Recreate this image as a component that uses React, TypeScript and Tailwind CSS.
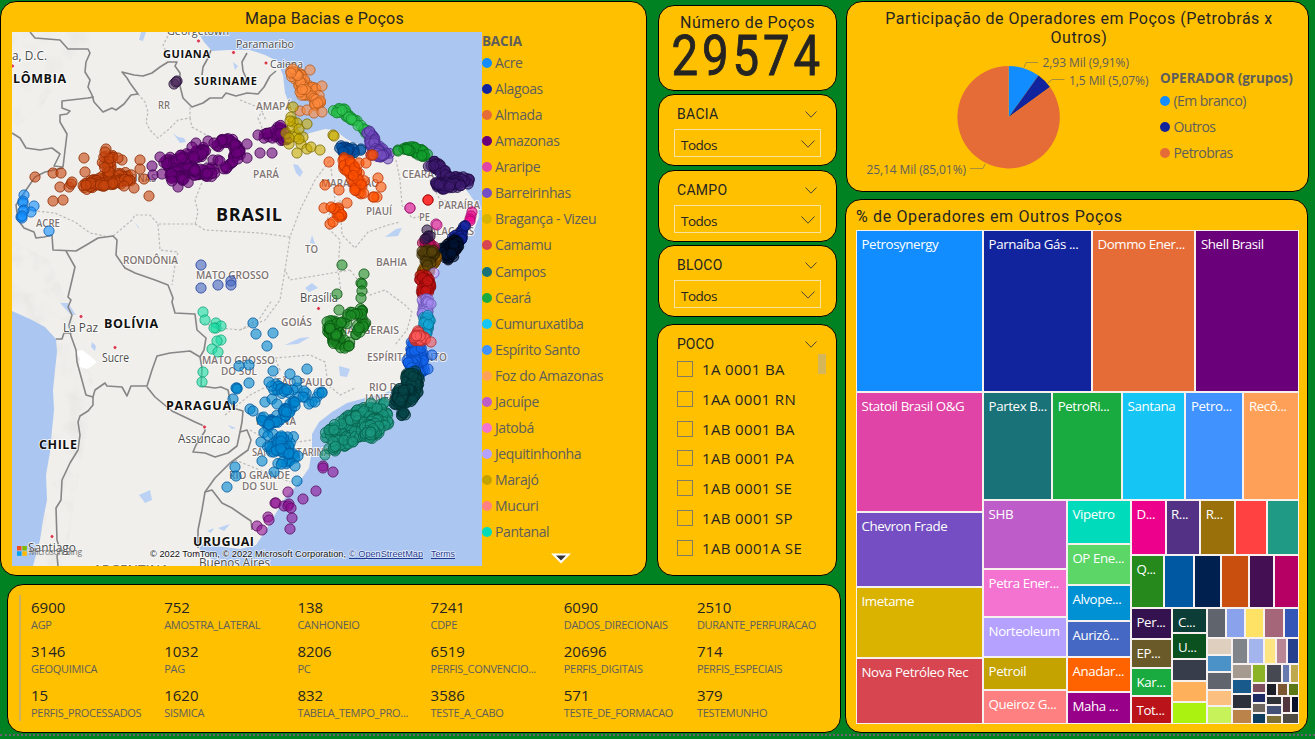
import React from "react";

const TITLE = "font-['Roboto',sans-serif] text-[#252423]";
const BODY = "font-['Open_Sans','Noto_Sans',sans-serif]";

/* ---------- Map geometry ---------- */

type Pt = [number, number];

const LAND_BORDERS = [
  "M30,32L35,38L60,40L68,49L88,49L90,53L86,62L85,72L90,80L88,87L92,95L94,102L103,112L112,108L116,110L124,104L131,95L138,94L130,83L127,78L122,72L134,75L143,76L152,73L160,67L168,62L177,62L175,66L180,73L180,86L183,98L192,107L203,103L210,98L222,98L226,93L236,96L247,93L258,94L264,87L270,76L276,71",
  "M211,50L208,58L203,67L202,75",
  "M247,53L242,62L243,71L247,80",
  "M94,97L88,98L62,101L62,108L70,111L67,114L60,115L60,122L67,134L63,167L54,166L60,154L52,148L40,150L26,148L20,138L12,133",
  "M63,168L45,172L35,177L24,193L16,205L18,220L24,228L34,232L36,238L44,237L52,235L53,250L76,251L88,244L98,238L113,236L117,240L116,255L125,268L135,273L155,280L168,285L173,298L172,302L175,313L195,314L197,330L206,338L204,350L200,357L202,368L201,386L215,388L221,387L228,390L230,400L233,408L243,411L242,422L240,432",
  "M66,251L75,267L72,280L68,297L71,300L68,307L72,315L69,325L71,336L76,350L77,362L83,384L86,395L93,397L95,390L105,383L107,386L122,387L127,396L131,386L147,386L152,370L157,356L170,353L190,351L200,357",
  "M56,339L62,339L64,333L70,333",
  "M147,387L155,397L172,411L195,422L204,426L205,431L196,445L193,452L205,453L215,457L228,453L237,446L240,432L247,430L251,440L248,450L230,463L215,478L205,492L202,510L198,530L198,548",
  "M205,492L212,490L222,503L232,508L245,517L251,521L252,530",
  "M93,397L93,405L88,411L80,416L78,422L80,435L78,450L70,463L62,480L61,500L56,508L57,540L60,550L57,556L58,566",
];

const STATE_BORDERS = [
  "M138,94L145,102L148,112L146,122L150,130L158,138L168,130L178,120L190,118L190,107",
  "M190,118L192,127L215,140L205,165L203,180L195,200L198,212L195,225",
  "M24,193L28,210L55,213L75,222L90,233L105,236",
  "M113,236L132,220L135,215L150,215L158,224L195,224",
  "M158,224L160,250L178,252L175,265L172,285",
  "M195,224L205,230L260,233L290,237L300,210L315,180L330,160",
  "M290,237L285,270L290,280L320,275L350,270",
  "M285,270L280,300L265,320L240,330L220,328L200,322",
  "M240,330L260,318L272,300",
  "M330,160L335,200L325,225L340,240L338,270L342,300",
  "M340,200L342,235L355,248L368,232L388,225L400,222",
  "M396,160L400,180L402,205L412,218L430,215",
  "M350,270L370,295L385,290L405,305L412,312L407,330L395,345",
  "M263,110L258,118L265,135L272,140",
  "M240,100L260,108L266,120",
  "M430,180L440,200L470,205",
  "M225,415L250,395L270,385L280,370L275,358L310,355L325,362L328,385L340,395L355,388",
  "M250,430L275,445L312,440",
  "M235,460L260,470L290,482",
  "M170,32L163,45L170,60",
];

const LAKES = [
  "M173,133L178,137L184,138L186,142L180,143Z",
  "M293,164L298,165L303,172L300,177L296,173Z",
  "M60,303L68,303L76,315L70,314Z",
  "M139,495L150,490L152,500L145,503Z",
  "M141,32L146,32L143,41L139,40Z",
  "M92,342L96,346L95,351L91,347Z",
  "M305,288L312,283L318,288L309,292Z",
  "M285,345L300,338L310,337L298,344Z",
  "M134,222L140,230L138,226Z",
  "M385,237L396,229L402,228L398,236Z",
  "M339,366L350,369L347,377L340,376Z",
  "M228,425L236,428L232,429Z",
  "M207,531L214,528L211,533Z",
  "M218,528L230,524L224,531Z",
  "M312,235L315,244L310,243Z",
  "M233,62L238,66L235,70Z",
];

interface Cluster {
  fill: string;
  stroke: string;
  pts?: Pt[];
  dense?: { path: Pt[]; spread: number; n: number }[];
}

const CLUSTERS: Cluster[] = [
  { fill: "#118dff", stroke: "#0a5fb4", pts: [[24, 195], [23, 201], [23, 203], [34, 206], [31, 212], [24, 210], [23, 211], [21, 217], [22, 218], [22, 216], [49, 231]] },
  {
    fill: "#c8460f", stroke: "#8f2a00",
    pts: [[35, 177], [53, 173], [61, 173], [53, 201], [63, 200], [60, 187], [69, 187], [71, 184], [72, 182], [84, 158], [106, 149], [105, 152], [85, 172], [140, 160], [140, 169], [144, 179], [134, 188], [149, 196], [122, 160], [118, 158], [124, 186]],
    dense: [{ path: [[84, 186], [98, 181], [115, 179], [129, 176]], spread: 5, n: 50 }, { path: [[107, 157], [109, 172]], spread: 7, n: 22 }, { path: [[83, 186], [112, 184], [130, 180]], spread: 2.5, n: 36 }],
  },
  {
    fill: "#6b007b", stroke: "#3f0050",
    pts: [[160, 157], [152, 166], [153, 175], [162, 174], [196, 143], [208, 141], [214, 143], [247, 144], [247, 158], [258, 135], [260, 153], [272, 153], [213, 160], [218, 160], [220, 161], [178, 187], [172, 181], [192, 147]],
    dense: [{ path: [[168, 161], [178, 168], [195, 172], [212, 172]], spread: 5, n: 85 }, { path: [[175, 160], [198, 155], [202, 150]], spread: 4, n: 46 }, { path: [[170, 177], [188, 179]], spread: 4, n: 16 }, { path: [[218, 146], [226, 138], [236, 145], [238, 155], [226, 169]], spread: 3.2, n: 52 }, { path: [[264, 137], [275, 135], [281, 128], [285, 143]], spread: 4, n: 32 }],
  },
  { fill: "#4b2a5c", stroke: "#200a35", pts: [[174, 84], [177, 81], [176, 82]] },
  {
    fill: "#ff8a3d", stroke: "#b85b1c",
    pts: [[293, 69], [310, 70], [322, 86], [300, 111], [307, 110], [314, 113], [322, 112], [291, 73]],
    dense: [{ path: [[290, 73], [298, 76], [305, 88], [313, 92]], spread: 5, n: 55 }, { path: [[300, 92], [316, 97], [318, 106]], spread: 4, n: 25 }],
  },
  { fill: "#c8ae00", stroke: "#7c6a00", pts: [[293, 107], [291, 117], [293, 122], [307, 124], [297, 123], [286, 133], [295, 134], [303, 137], [296, 137], [289, 144], [301, 144], [297, 153], [307, 149], [311, 147], [320, 150], [292, 127], [299, 129], [290, 121], [289, 138], [333, 135], [334, 136], [299, 139]] },
  { fill: "#2ec652", stroke: "#12852d", dense: [{ path: [[335, 111], [342, 110], [350, 117], [360, 125], [368, 134]], spread: 2.5, n: 42 }] },
  { fill: "#744ec2", stroke: "#46288b", dense: [{ path: [[370, 133], [373, 145], [383, 153]], spread: 4, n: 36 }, { path: [[374, 153], [388, 155]], spread: 4, n: 30 }] },
  { fill: "#0054a6", stroke: "#00306c", dense: [{ path: [[342, 147], [348, 152], [362, 148]], spread: 3.5, n: 34 }] },
  {
    fill: "#ff5200", stroke: "#c03200",
    pts: [[329, 162], [325, 185], [324, 208], [331, 207], [330, 224], [339, 190], [347, 203], [378, 178], [381, 187], [377, 197], [373, 197], [371, 155], [373, 155], [359, 163], [366, 163], [339, 217], [333, 222], [374, 197]],
    dense: [{ path: [[346, 162], [353, 172], [360, 185], [360, 196]], spread: 6, n: 50 }, { path: [[336, 209], [340, 212], [340, 218]], spread: 3, n: 12 }],
  },
  { fill: "#13a02f", stroke: "#08681a", pts: [[398, 150], [398, 151]], dense: [{ path: [[406, 149], [416, 150], [428, 156]], spread: 3.5, n: 38 }] },
  { fill: "#3e1a70", stroke: "#1f0a42", dense: [{ path: [[430, 163], [442, 170], [448, 180], [468, 180]], spread: 4.5, n: 70 }, { path: [[437, 186], [460, 184]], spread: 4, n: 60 }] },
  { fill: "#ff1212", stroke: "#a50a0a", pts: [[428, 200], [428, 200]] },
  { fill: "#e044a7", stroke: "#a01272", pts: [[410, 208], [410, 208], [436, 224], [437, 225]] },
  { fill: "#ec008c", stroke: "#a8066c", pts: [[472, 212], [471, 216], [470, 219], [470, 221]] },
  { fill: "#12239e", stroke: "#081252", dense: [{ path: [[466, 228], [460, 236], [454, 240]], spread: 4, n: 34 }] },
  { fill: "#001433", stroke: "#000510", dense: [{ path: [[443, 252], [455, 244], [449, 256]], spread: 5, n: 80 }] },
  { fill: "#c2115f", stroke: "#7d083c", dense: [{ path: [[424, 241], [432, 246]], spread: 3, n: 16 }] },
  { fill: "#351d51", stroke: "#1c0c2c", pts: [[427, 230], [428, 236], [427, 238], [430, 236], [425, 239]] },
  { fill: "#9b6500", stroke: "#5e3900", dense: [{ path: [[434, 256], [430, 266], [422, 275]], spread: 4, n: 60 }] },
  { fill: "#57420c", stroke: "#2d2100", dense: [{ path: [[424, 254], [432, 252], [428, 262]], spread: 4, n: 34 }] },
  { fill: "#c4a2ff", stroke: "#7a56b8", pts: [[434, 273]] },
  { fill: "#c81515", stroke: "#860808", dense: [{ path: [[423, 278], [428, 285], [424, 292]], spread: 4.5, n: 60 }] },
  { fill: "#a58af0", stroke: "#6a55b4", dense: [{ path: [[426, 299], [425, 313]], spread: 4, n: 36 }], pts: [[431, 304]] },
  { fill: "#16a8d8", stroke: "#0b6f93", dense: [{ path: [[426, 318], [428, 324], [426, 334]], spread: 4.5, n: 30 }] },
  { fill: "#1467f0", stroke: "#0745b3", dense: [{ path: [[415, 344], [418, 358], [420, 370]], spread: 6, n: 115 }, { path: [[411, 362], [417, 375]], spread: 5, n: 30 }], pts: [[432, 355], [428, 369]] },
  { fill: "#ff5a5a", stroke: "#b22b2b", dense: [{ path: [[419, 333], [416, 339], [424, 338]], spread: 3.5, n: 36 }], pts: [[431, 342]] },
  { fill: "#07464a", stroke: "#002c30", dense: [{ path: [[412, 376], [413, 388], [404, 400]], spread: 7, n: 150 }, { path: [[402, 390], [398, 404]], spread: 5, n: 50 }, { path: [[400, 414], [404, 414]], spread: 2, n: 6 }] },
  {
    fill: "#1b9a80", stroke: "#08604c",
    pts: [[353, 442], [325, 455], [371, 403], [377, 408], [329, 430], [334, 430]],
    dense: [{ path: [[326, 434], [345, 424], [362, 413], [388, 407]], spread: 6, n: 85 }, { path: [[333, 447], [350, 437], [370, 425], [386, 420]], spread: 6, n: 130 }, { path: [[365, 434], [376, 430]], spread: 7, n: 55 }],
  },
  { fill: "#1d8c25", stroke: "#0a5410", pts: [[342, 265], [364, 274], [337, 294], [361, 283], [362, 284], [362, 291], [339, 310], [361, 298]], dense: [{ path: [[331, 322], [334, 333], [340, 343]], spread: 6, n: 62 }, { path: [[343, 323], [360, 311], [363, 322], [355, 340], [341, 351]], spread: 4.5, n: 38 }] },
  { fill: "#4565c2", stroke: "#223e9c", pts: [[201, 265], [201, 288], [218, 285], [231, 281], [231, 285]] },
  { fill: "#1bdda5", stroke: "#10a87b", pts: [[203, 312], [205, 320], [216, 323], [216, 328], [221, 326], [214, 328], [221, 340], [217, 341], [212, 349], [218, 352], [203, 372], [202, 382]] },
  {
    fill: "#0087d1", stroke: "#005aa0",
    pts: [[253, 323], [256, 334], [273, 333], [267, 346], [239, 366], [249, 365], [249, 383], [237, 388], [236, 388], [237, 389], [233, 399], [250, 409], [253, 411], [307, 369], [290, 374], [273, 371], [269, 382], [297, 381], [304, 391], [322, 392], [317, 397], [312, 402], [309, 404], [315, 402], [235, 467], [236, 476], [227, 487], [262, 461], [297, 481], [295, 466], [298, 456], [261, 442], [274, 472], [265, 402], [272, 399], [277, 404], [287, 390], [295, 402], [319, 393], [303, 397], [322, 393]],
    dense: [{ path: [[268, 388], [285, 388], [303, 396]], spread: 6, n: 18 }, { path: [[263, 420], [275, 421], [286, 412], [297, 401]], spread: 3.5, n: 42 }, { path: [[268, 430], [276, 450], [290, 436]], spread: 7, n: 46 }, { path: [[277, 452], [290, 456], [281, 465]], spread: 6, n: 20 }],
  },
  { fill: "#8f0f92", stroke: "#590b60", pts: [[323, 466], [323, 468], [333, 472], [316, 491], [303, 499], [288, 492], [275, 503], [276, 503], [284, 506], [289, 504], [288, 506], [291, 508], [292, 518], [290, 529], [268, 517], [269, 520], [257, 526], [262, 530]] },
];

function seeded(seed: number) {
  let s = seed;
  return () => {
    s = (s * 1664525 + 1013904223) % 4294967296;
    return s / 4294967296;
  };
}

function spreadPoints(path: Pt[], spread: number, n: number, seed: number): Pt[] {
  const rnd = seeded(seed);
  const out: Pt[] = [];
  for (let i = 0; i < n; i++) {
    const t = rnd() * (path.length - 1);
    const k = Math.floor(t);
    const f = t - k;
    const [ax, ay] = path[k];
    const [bx, by] = path[k + 1];
    const ang = rnd() * Math.PI * 2;
    const r = Math.sqrt(rnd()) * spread;
    out.push([ax + (bx - ax) * f + Math.cos(ang) * r, ay + (by - ay) * f + Math.sin(ang) * r]);
  }
  return out;
}

/* text, left x, baseline y, width, size, kind */
type Label = [string, number, number, number, number, "country" | "state" | "city"];

const LABELS: Label[] = [
  ["BRASIL", 216, 221, 66, 18, "country"],
  ["GUIANA", 163, 58, 47, 11, "country"],
  ["SURINAME", 194, 85, 63, 11, "country"],
  ["LÔMBIA", 13, 83, 53, 12.5, "country"],
  ["BOLÍVIA", 104, 328, 54, 12.5, "country"],
  ["PARAGUAI", 166, 410, 70, 12.5, "country"],
  ["CHILE", 39, 449, 38, 12.5, "country"],
  ["URUGUAI", 193, 546, 61, 12.5, "country"],
  ["RR", 158, 109, 12, 10.5, "state"],
  ["AMAPÁ", 256, 110, 36, 10.5, "state"],
  ["PARÁ", 253, 178, 26, 10.5, "state"],
  ["AMAZONAS", 104, 182, 52, 10.5, "state"],
  ["ACRE", 36, 227, 24, 10.5, "state"],
  ["RONDÔNIA", 123, 264, 55, 10.5, "state"],
  ["MATO GROSSO", 196, 279, 73, 10.5, "state"],
  ["TO", 305, 253, 13, 10.5, "state"],
  ["MARANHÃO", 321, 187, 58, 10.5, "state"],
  ["CEARÁ", 402, 178, 32, 10.5, "state"],
  ["PIAUÍ", 366, 215, 26, 10.5, "state"],
  ["PARAÍBA", 438, 209, 42, 10.5, "state"],
  ["PE", 419, 221, 11, 10.5, "state"],
  ["ALAGOAS", 430, 235, 44, 10.5, "state"],
  ["BAHIA", 376, 266, 31, 10.5, "state"],
  ["GOIÁS", 281, 326, 31, 10.5, "state"],
  ["MINAS GERAIS", 326, 334, 73, 10.5, "state"],
  ["MATO GROSSO", 202, 364, 73, 10.5, "state"],
  ["DO SUL", 221, 374.5, 36, 10.5, "state"],
  ["ESPÍRITO SANTO", 367, 361, 80, 10.5, "state"],
  ["SÃO PAULO", 276, 386, 57, 10.5, "state"],
  ["RIO DE", 369, 391, 34, 10.5, "state"],
  ["JANEIRO", 365, 402, 42, 10.5, "state"],
  ["PARANÁ", 256, 425, 40, 10.5, "state"],
  ["SANTA CATARINA", 252, 456, 78, 10.5, "state"],
  ["RIO GRANDE", 229, 479, 61, 10.5, "state"],
  ["DO SUL", 242, 489.5, 36, 10.5, "state"],
  ["Georgetown", 167, 35, 62, 11.5, "city"],
  ["Paramaribo", 236, 48, 58, 11.5, "city"],
  ["Caiena", 270, 68, 33, 11.5, "city"],
  ["a, D.C.", 12, 60, 35, 12, "city"],
  ["La Paz", 63, 332, 35, 12, "city"],
  ["Sucre", 102, 362, 27, 12, "city"],
  ["Assuncao", 178, 443, 52, 12, "city"],
  ["Santiago", 28, 552, 48, 12, "city"],
  ["Brasília", 300, 302, 38, 12, "city"],
  ["Buenos Aires", 199, 567, 71, 12, "city"],
  ["ARGENTINA", 93, 574, 76, 12, "state"],
];

const CITY_DOTS: Pt[] = [[198.5, 41], [233.5, 52.5], [266, 63], [12.5, 66], [81, 316.5], [115, 347.5], [204.5, 427], [52, 536.5], [318.5, 308.5], [197, 553]];

function MapView() {
  return (
    <svg className="block h-[534px] w-[470px] shrink-0" viewBox="12 32 470 534" fontFamily="'Open Sans','Noto Sans',sans-serif">
      <defs>
        <filter id="relief" x="0" y="0" width="100%" height="100%">
          <feTurbulence type="fractalNoise" baseFrequency="0.045" numOctaves="3" seed="4" />
          <feColorMatrix values="0 0 0 0 0.5 0 0 0 0 0.5 0 0 0 0 0.48 0.9 0 0 0 -0.42" />
          <feComposite operator="in" in2="SourceGraphic" />
        </filter>
      </defs>
      <rect x="12" y="32" width="470" height="534" fill="#f0efec" />
      <path d="M12,240L50,260L75,320L95,390L85,440L75,500L65,566L12,566Z" filter="url(#relief)" opacity="0.5" />
      <path d="M12,32H110L70,60L40,110L12,130Z" filter="url(#relief)" opacity="0.4" />
      <path d="M74,352L82,350L90,356L97,362L88,369L79,367L80,358Z" fill="#fff" />
      <path d="M12,311L30,319L45,327L56,339L57,352L55,370L53,390L54,410L52,430L50,452L46,475L47,500L43,520L40,540L33,566H12Z" fill="#abc6f0" />
      <path
        d="M198,32L204,42L212,51L228,50L250,50L265,55L277,61L283,75L285,93L291,108L294,125L300,138L310,133L325,129L335,130L345,138L352,142L365,146L380,152L395,150L410,150L425,160L440,173L455,183L465,188L472,198L478,205L479,217L474,230L463,242L452,254L440,264L433,282L427,300L425,320L426,335L422,350L418,365L408,380L396,388L383,394L365,398L347,403L332,412L319,422L312,434L312,450L309,468L298,484L285,498L276,513L266,530L256,545L240,549L215,546L205,540L199,549L210,557L215,566H482V32Z"
        fill="#abc6f0"
      />
      {LAKES.map((d, i) => (
        <path key={i} d={d} fill="#bcd2f4" />
      ))}
      {STATE_BORDERS.map((d, i) => (
        <path key={i} d={d} fill="none" stroke="#bcbab8" strokeWidth="1.2" strokeDasharray="2.5 2" />
      ))}
      {LAND_BORDERS.map((d, i) => (
        <path key={i} d={d} fill="none" stroke="#868686" strokeWidth="1.6" strokeLinejoin="round" />
      ))}
      {CITY_DOTS.map(([x, y], i) => (
        <circle key={i} cx={x} cy={y} r="2" fill="#d6394c" stroke="#fff" strokeWidth="0.8" />
      ))}
      {LABELS.map(([t, x, y, w, s, kind], i) => (
        <text
          key={i}
          x={x}
          y={y}
          fontSize={s}
          textLength={w}
          lengthAdjust={kind === "country" ? "spacing" : "spacingAndGlyphs"}
          fontWeight={kind === "country" ? 700 : kind === "state" ? 600 : 400}
          fill={kind === "country" ? "#111" : kind === "state" ? "#7f7472" : "#4c4c4c"}
          stroke="#fff"
          strokeWidth="2"
          strokeOpacity="0.75"
          paintOrder="stroke"
        >
          {t}
        </text>
      ))}
      {CLUSTERS.map((c, i) => {
        const pts = [...(c.dense ?? []).flatMap((d, k) => spreadPoints(d.path, d.spread, d.n, i * 97 + k * 13 + 7)), ...(c.pts ?? [])];
        return (
          <g key={i} fill={c.fill} fillOpacity="0.6" stroke={c.stroke} strokeOpacity="0.8" strokeWidth="1">
            {pts.map(([x, y], k) => (
              <circle key={k} cx={x} cy={y} r="5.1" />
            ))}
          </g>
        );
      })}
      <rect x="17" y="546" width="4.5" height="4.5" fill="#f25022" />
      <rect x="22.3" y="546" width="4.5" height="4.5" fill="#7fba00" />
      <rect x="17" y="551.3" width="4.5" height="4.5" fill="#00a4ef" />
      <rect x="22.3" y="551.3" width="4.5" height="4.5" fill="#ffb900" />
      <text x="29" y="555" fontSize="8.5" textLength="53" fill="#777">Microsoft Bing</text>
      <g fontFamily="'Liberation Sans',Arial,sans-serif" fontSize="9.3" stroke="#fff" strokeWidth="1.5" strokeOpacity="0.7" paintOrder="stroke">
        <text x="150" y="557" textLength="196" lengthAdjust="spacingAndGlyphs" fill="#111">© 2022 TomTom, © 2022 Microsoft Corporation,</text>
        <text x="349" y="557" textLength="74" lengthAdjust="spacingAndGlyphs" fill="#1f3a93">© OpenStreetMap</text>
        <text x="431" y="557" textLength="24" lengthAdjust="spacingAndGlyphs" fill="#1f3a93">Terms</text>
      </g>
      <path d="M349,558.500H423M431,558.500H455" stroke="#1f3a93" strokeWidth="1" />
    </svg>
  );
}

const BASINS: [string, string][] = [
  ["Acre", "#118dff"],
  ["Alagoas", "#12239e"],
  ["Almada", "#e66c37"],
  ["Amazonas", "#6b007b"],
  ["Araripe", "#e044a7"],
  ["Barreirinhas", "#744ec2"],
  ["Bragança - Vizeu", "#d9b300"],
  ["Camamu", "#d64550"],
  ["Campos", "#197278"],
  ["Ceará", "#1aab40"],
  ["Cumuruxatiba", "#15c6f4"],
  ["Espírito Santo", "#4092ff"],
  ["Foz do Amazonas", "#ffa058"],
  ["Jacuípe", "#be5dc9"],
  ["Jatobá", "#f472d0"],
  ["Jequitinhonha", "#b5a1ff"],
  ["Marajó", "#c4a200"],
  ["Mucuri", "#ff8080"],
  ["Pantanal", "#00dbbc"],
];

function Dot({ color }: { color: string }) {
  return <span className="h-[10px] w-[10px] shrink-0 rounded-full" style={{ backgroundColor: color }} />;
}

/* ---------- Treemap ---------- */

interface Leaf {
  s: number;
  c: string;
  t?: string;
}
interface Branch {
  s: number;
  d: "row" | "col";
  k: TreeNode[];
}
type TreeNode = Leaf | Branch;

const leaf = (s: number, c: string, t?: string): Leaf => ({ s, c, t });
const row = (s: number, ...k: TreeNode[]): Branch => ({ s, d: "row", k });
const col = (s: number, ...k: TreeNode[]): Branch => ({ s, d: "col", k });

const TREE: Branch = col(
  494,
  row(162, leaf(127.3, "#118dff", "Petrosynergy"), leaf(108.7, "#12239e", "Parnaíba Gás ..."), leaf(103.3, "#e66c37", "Dommo Ener..."), leaf(103.3, "#6b007b", "Shell Brasil")),
  row(
    332,
    col(127, leaf(121.3, "#e044a7", "Statoil Brasil O&G"), leaf(74.6, "#744ec2", "Chevron Frade"), leaf(70, "#d9b300", "Imetame"), leaf(66, "#d64550", "Nova Petróleo Rec")),
    col(
      315.6,
      row(108.4, leaf(69.2, "#197278", "Partex B..."), leaf(70, "#1aab40", "PetroRi..."), leaf(63.3, "#15c6f4", "Santana"), leaf(57.8, "#4092ff", "Petro..."), leaf(55.3, "#ffa058", "Recô...")),
      row(
        223.6,
        col(83.7, leaf(69.3, "#be5dc9", "SHB"), leaf(48.4, "#f472d0", "Petra Ener..."), leaf(39.6, "#b5a1ff", "Norteoleum"), leaf(33, "#c4a200", "Petroil"), leaf(33, "#ff8080", "Queiroz G...")),
        col(64, leaf(43.5, "#00dbbc", "Vipetro"), leaf(41, "#5bd667", "OP Ene..."), leaf(36, "#0091d5", "Alvope..."), leaf(36.6, "#4668c5", "Aurizô..."), leaf(34, "#ff6300", "Anadar..."), leaf(32, "#990089", "Maha ...")),
        col(
          167.8,
          row(54.6, leaf(34.5, "#ec008c", "D..."), leaf(34.6, "#533285", "R..."), leaf(34.4, "#99700a", "R..."), leaf(32.3, "#ff4141"), leaf(31.7, "#1f9a85")),
          row(53, leaf(33, "#25891c", "Q..."), leaf(30.3, "#0057a2"), leaf(27.3, "#002050"), leaf(27.7, "#c94f0f"), leaf(25, "#450f54"), leaf(24.4, "#b60064")),
          row(
            116,
            col(41.4, leaf(31.3, "#34124f", "Per..."), leaf(28.4, "#6a5a29", "EP..."), leaf(28, "#1aab40", "Kar..."), leaf(28.3, "#ba141a", "Tot...")),
            col(34, leaf(25.6, "#0c3d37", "C..."), leaf(26, "#0b511f", "U..."), leaf(21.4, "#373d4a"), leaf(21.3, "#ffb05b"), leaf(21.7, "#acf210")),
            col(
              92.2,
              row(30, leaf(19.4, "#5f646d"), leaf(19.3, "#8aa2eb"), leaf(19.3, "#fee266"), leaf(19.7, "#a66679"), leaf(14.6, "#3456b7")),
              row(
                86,
                col(25.4, leaf(17.3, "#dfcfbf"), leaf(17, "#4a92c7"), leaf(17.3, "#5f646d"), leaf(16.7, "#fbc07f"), leaf(17.7, "#c8f25a")),
                col(
                  66.8,
                  row(26.3, leaf(16.5, "#7f858b"), leaf(16.7, "#a4b4ec"), leaf(11, "#fee581"), leaf(11, "#b88694"), leaf(11.5, "#27408d")),
                  row(
                    59.7,
                    col(19.5, leaf(15, "#a59a8f"), leaf(15, "#185a8b"), leaf(14.7, "#2b303a"), leaf(15, "#bb824a")),
                    col(
                      47.3,
                      row(18.7, leaf(15.4, "#8cb325"), leaf(16, "#464952"), leaf(7.6, "#677ab0"), leaf(8.2, "#bfa94f")),
                      row(
                        41,
                        col(14.8, leaf(10, "#7d4f5c"), leaf(10.3, "#1b2a62"), leaf(10, "#6d675f"), leaf(10.7, "#0f3d5e")),
                        col(
                          32.5,
                          row(13.3, leaf(11, "#1c1f28"), leaf(10.7, "#7d5632"), leaf(10.8, "#5d7817")),
                          row(
                            27.7,
                            col(16, leaf(9, "#2f3236"), leaf(9.2, "#445176"), leaf(9.5, "#7f7035")),
                            col(16.5, row(18.2, leaf(8, "#53353d"), leaf(8.5, "#090f2b")), leaf(9.5, "#504b42")),
                          ),
                        ),
                      ),
                    ),
                  ),
                ),
              ),
            ),
          ),
        ),
      ),
    ),
  ),
);

function Tile({ node }: { node: TreeNode }) {
  if ("k" in node) {
    return (
      <div className={node.d === "row" ? "flex min-h-0 min-w-0 flex-row" : "flex min-h-0 min-w-0 flex-col"} style={{ flex: `${node.s} 1 0px` }}>
        {node.k.map((n, i) => (
          <Tile key={i} node={n} />
        ))}
      </div>
    );
  }
  return (
    <div className="min-h-0 min-w-0 overflow-hidden border border-[#f6f1ee]" style={{ flex: `${node.s} 1 0px`, backgroundColor: node.c }}>
      {node.t ? <div className={`${BODY} whitespace-nowrap pl-[4.5px] pt-[4px] text-[13.3px] leading-[18px] tracking-[-0.4px] text-white`}>{node.t}</div> : null}
    </div>
  );
}

/* ---------- Small panels ---------- */

function Chevron({ w, h, className = "" }: { w: number; h: number; className?: string }) {
  return (
    <svg width={w} height={h} viewBox={`0 0 ${w} ${h}`} className={className} fill="none" stroke="#4a4438" strokeWidth="1">
      <path d={`M0.5,0.5L${w / 2},${h - 0.8}L${w - 0.5},0.5`} />
    </svg>
  );
}

const CARD = "border border-black bg-[#ffc000]";

function Slicer({ name, className }: { name: string; className: string }) {
  return (
    <section className={`${CARD} ${className} ml-px w-[179px] rounded-[16px] pl-[15px]`}>
      <div className="flex h-[34px] items-end justify-between pr-[19px]">
        <h3 className={`${TITLE} pb-[5px] pl-[3px] text-[14px] leading-[20px] tracking-[0.3px]`}>{name}</h3>
        <Chevron w={12} h={7} className="mb-[11px]" />
      </div>
      <div className="flex h-[28px] w-[147px] items-center justify-between border border-[#f8e2a0] pl-[6px] pr-[5px]">
        <span className={`${BODY} pt-[3px] text-[13.5px] leading-[20px] tracking-[-0.5px] text-[#252423]`}>Todos</span>
        <Chevron w={14} h={8} className="mt-px" />
      </div>
    </section>
  );
}

const WELLS = ["1A 0001 BA", "1AA 0001 RN", "1AB 0001 BA", "1AB 0001 PA", "1AB 0001 SE", "1AB 0001 SP", "1AB 0001A SE"];

const STATS: [string, string][] = [
  ["6900", "AGP"],
  ["752", "AMOSTRA_LATERAL"],
  ["138", "CANHONEIO"],
  ["7241", "CDPE"],
  ["6090", "DADOS_DIRECIONAIS"],
  ["2510", "DURANTE_PERFURACAO"],
  ["3146", "GEOQUIMICA"],
  ["1032", "PAG"],
  ["8206", "PC"],
  ["6519", "PERFIS_CONVENCIO..."],
  ["20696", "PERFIS_DIGITAIS"],
  ["714", "PERFIS_ESPECIAIS"],
  ["15", "PERFIS_PROCESSADOS"],
  ["1620", "SISMICA"],
  ["832", "TABELA_TEMPO_PRO..."],
  ["3586", "TESTE_A_CABO"],
  ["571", "TESTE_DE_FORMACAO"],
  ["379", "TESTEMUNHO"],
];

function arc(cx: number, cy: number, r: number, from: number, to: number) {
  const p = (f: number) => `${cx + r * Math.sin(f * 2 * Math.PI)},${cy - r * Math.cos(f * 2 * Math.PI)}`;
  return `M${cx},${cy}L${p(from)}A${r},${r} 0 ${to - from > 0.5 ? 1 : 0} 1 ${p(to)}Z`;
}

function PieChart() {
  return (
    <svg className="block h-[140px] w-[305px] shrink-0" viewBox="850 48 305 140" fontFamily="'Open Sans','Noto Sans',sans-serif" fontSize="12" fill="#605e5c">
      <path d={arc(1008.6, 117.2, 51.2, 0, 0.0991)} fill="#118dff" />
      <path d={arc(1008.6, 117.2, 51.2, 0.0991, 0.1498)} fill="#12239e" />
      <path d={arc(1008.6, 117.2, 51.2, 0.1498, 1)} fill="#e66c37" />
      <g fill="none" stroke="#a98f3c" strokeWidth="1">
        <path d="M1024,67.500L1026,62.500H1038" />
        <path d="M1048,83L1052,79.500H1064.500" />
        <path d="M970,168.500H983L985,164" />
      </g>
      <text x="1042.500" y="67" textLength="86.500">2,93 Mil (9,91%)</text>
      <text x="1069" y="85" textLength="79.500">1,5 Mil (5,07%)</text>
      <text x="866.500" y="174" textLength="99.500">25,14 Mil (85,01%)</text>
    </svg>
  );
}

export default function App() {
  return (
    <main className="flex h-[739px] w-[1315px] flex-col overflow-hidden bg-[#018222]">
      <div className="flex h-[733px] shrink-0">
        <div className="flex w-[845px] shrink-0 flex-col">
          <div className="flex h-[583px] shrink-0">
            <section className={`${CARD} mt-px h-[575px] w-[647px] shrink-0 rounded-[16px] pl-[11px]`}>
              <h2 className={`${TITLE} h-[30px] pr-[9px] pt-[5px] text-center text-[16px] leading-[24px] tracking-[0.3px]`}>Mapa Bacias e Poços</h2>
              <div className="flex">
                <MapView />
                <div className={`${BODY} w-[150px] text-[#605e5c]`}>
                  <h3 className="h-[18px] text-[13.5px] font-bold leading-[19px] tracking-[-0.2px]">BACIA</h3>
                  <ul>
                    {BASINS.map(([name, color]) => (
                      <li key={name} className="flex h-[26.07px] items-center gap-[3px] text-[14px] tracking-[-0.4px]">
                        <Dot color={color} />
                        <span className="whitespace-nowrap pb-px">{name}</span>
                      </li>
                    ))}
                  </ul>
                  <svg className="ml-[69px] mt-[8px] block" width="20" height="11" viewBox="0 0 20 11">
                    <path d="M0,0.500H20L10,10.500Z" fill="#fff" />
                    <path d="M5,2.500H15L10,7.500Z" fill="#333" />
                  </svg>
                </div>
              </div>
            </section>
            <div className="ml-[10px] flex w-[181px] flex-col pt-[5px]">
              <section className={`${CARD} ml-px h-[86px] w-[179px] rounded-[16px] text-center`}>
                <h3 className={`${TITLE} h-[27px] pt-[6px] text-[16px] leading-[22px] tracking-[0.5px]`}>Número de Poços</h3>
                <p className={`${TITLE} origin-center scale-x-[0.86] pr-[2px] text-[55px] leading-[46px] tracking-[4.6px] [-webkit-text-stroke:0.9px_#252423]`}>29574</p>
              </section>
              <Slicer name="BACIA" className="mt-[3px] h-[72px]" />
              <Slicer name="CAMPO" className="mt-[4px] h-[72px]" />
              <Slicer name="BLOCO" className="mt-[3px] h-[72px]" />
              <section className={`${CARD} mt-[7px] h-[252px] w-[180px] rounded-[16px] pl-[19px] pr-[10px]`}>
                <div className="flex h-[29px] items-center justify-between pr-[9px] pt-[9px]">
                  <h3 className={`${TITLE} text-[14px] leading-[20px]`}>POCO</h3>
                  <Chevron w={12} h={7} />
                </div>
                <div className="flex justify-between">
                  <ul>
                    {WELLS.map((w) => (
                      <li key={w} className="flex h-[29.85px] items-center gap-[9px] whitespace-nowrap">
                        <span className="h-[16px] w-[16px] shrink-0 border border-[#857b60]" />
                        <span className={`${BODY} w-[108px] text-[15px] leading-[20px] tracking-[0.35px] text-[#252423]`}>{w}</span>
                      </li>
                    ))}
                  </ul>
                  <div className="h-[20px] w-[8px] bg-[#d5b659]" />
                </div>
              </section>
            </div>
          </div>
          <section className={`${CARD} ml-[7px] mt-px h-[149px] w-[834px] shrink-0 rounded-[16px] pl-[11px] pt-[10px]`}>
            <div className="h-[126px] border-l-2 border-[#cdb066] pl-[10px]">
              <dl className="grid grid-cols-[repeat(6,133.2px)] grid-rows-[repeat(3,44.2px)]">
                {STATS.map(([v, l]) => (
                  <div key={l} className={`${BODY} whitespace-nowrap pt-[2px]`}>
                    <dt className="text-[15px] leading-[20px] text-[#252423]">{v}</dt>
                    <dd className="text-[11px] leading-[15px] tracking-[-0.3px] text-[#605e5c]">{l}</dd>
                  </div>
                ))}
              </dl>
            </div>
          </section>
        </div>
        <div className="flex w-[464px] flex-col pt-px">
          <section className={`${CARD} ml-px h-[191px] w-[463px] shrink-0 rounded-[16px] pl-[3px]`}>
            <h2 className={`${TITLE} h-[46px] px-[10px] pt-[7px] text-center text-[16px] leading-[19px] tracking-[0.5px]`}>
              Participação de Operadores em Poços (Petrobrás x<br />
              Outros)
            </h2>
            <div className="flex">
              <PieChart />
              <div className={`${BODY} pl-[5px] pt-[20px] text-[#605e5c]`}>
                <h3 className="h-[20px] whitespace-nowrap text-[13.5px] font-bold leading-[20px] tracking-[-0.05px]">OPERADOR (grupos)</h3>
                <ul>
                  {[["(Em branco)", "#118dff"], ["Outros", "#12239e"], ["Petrobras", "#e66c37"]].map(([n, c]) => (
                    <li key={n} className="flex h-[25.9px] items-center gap-[3.5px] text-[14px] tracking-[-0.55px]">
                      <Dot color={c} />
                      <span className="whitespace-nowrap">{n}</span>
                    </li>
                  ))}
                </ul>
              </div>
            </div>
          </section>
          <section className={`${CARD} mt-[7px] h-[534px] w-[463px] shrink-0 rounded-[16px] px-[10px]`}>
            <h2 className={`${TITLE} h-[30px] pt-[6px] text-[16px] leading-[22px] tracking-[0.65px]`}>% de Operadores em Outros Poços</h2>
            <div className="flex h-[494px] w-[443px]">
              <Tile node={TREE} />
            </div>
          </section>
        </div>
      </div>
      <div className="mt-px h-0 border-t-2 border-dotted border-[#6b6070]" />
    </main>
  );
}
